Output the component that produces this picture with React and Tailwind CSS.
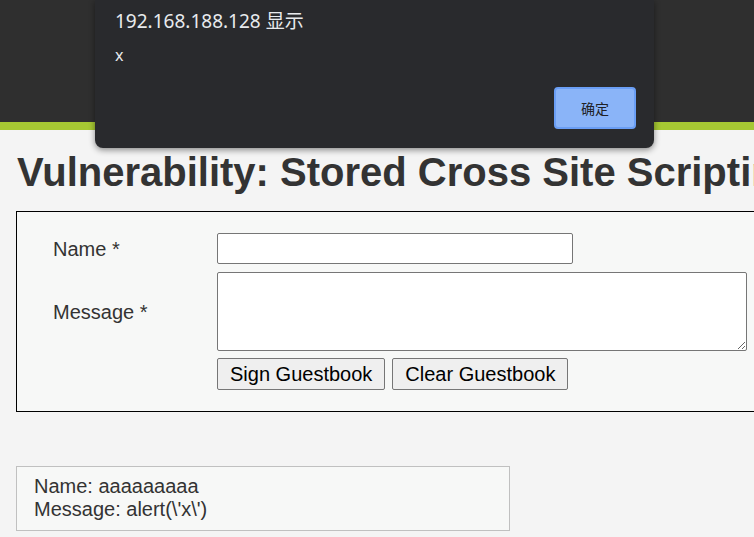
import React from 'react'

function AlertDialog()
{
    return(
        <div className="absolute left-[95px] top-0 w-[559px] h-[148px] bg-[#292a2d] rounded-b-[8px] shadow-[0_2px_6px_rgba(0,0,0,0.45)] font-['Noto_Sans','Noto_Sans_CJK_SC',sans-serif]">
            <div className="pl-[20px] pt-[7px] text-[19px] leading-[28px] text-[#e8eaed]">192.168.188.128 显示</div>
            <div className="pl-[20px] pt-[10px] text-[16px] leading-[20px] text-[#e8eaed]">x</div>
            <div className="flex justify-end pr-[18px] pt-[22px]">
                <button className="w-[82px] h-[42px] rounded-[4px] bg-[#8ab4f8] border-2 border-[#6a9ef5] text-[14px] text-[#202124] font-['Noto_Sans_CJK_SC',sans-serif]">确定</button>
            </div>
        </div>
    )
}

function App()
{
    return(
        <div className="relative w-[754px] h-[537px] overflow-hidden bg-[#f4f4f4] font-['Liberation_Sans',Arial,sans-serif] text-[#333]">
            <div className="h-[130px] bg-[#2f2f2f] border-b-[8px] border-[#a6c833]"></div>

            <div className="pl-[17px] w-[1200px]">
                <h1 className="mt-[19px] text-[40px] leading-[46px] font-bold text-[#333] whitespace-nowrap">Vulnerability: Stored Cross Site Scripting (XSS)</h1>

                <div className="mt-[16px] w-[900px] h-[201px] border border-black bg-[#f7f8f7] -ml-[1px]">
                    <form className="pt-[21px] pl-[36px]" onSubmit={(e)=>e.preventDefault()}>
                        <div className="flex items-center h-[31px]">
                            <label className="w-[164px] text-[20px] text-[#333]">Name *</label>
                            <input type="text" className="w-[356px] h-[31px] bg-white border border-[#767676] rounded-[2px] outline-none" />
                        </div>
                        <div className="flex mt-[8px]">
                            <label className="w-[164px] pt-[25px] text-[20px] text-[#333]">Message *</label>
                            <textarea className="w-[530px] h-[79px] bg-white border border-[#767676] rounded-[2px] outline-none"></textarea>
                        </div>
                        <div className="flex gap-[7px] mt-[7px] ml-[164px]">
                            <button className="h-[32px] px-[12px] bg-[#efefef] border border-[#767676] rounded-[2px] text-[20px] text-black">Sign Guestbook</button>
                            <button className="h-[32px] px-[12px] bg-[#efefef] border border-[#767676] rounded-[2px] text-[20px] text-black">Clear Guestbook</button>
                        </div>
                    </form>
                </div>

                <div className="mt-[54px] -ml-[1px] w-[494px] h-[65px] border border-[#c0c0c0] bg-[#f7f8f7] pl-[17px] pt-[8px] text-[20px] leading-[23px] text-[#333]">
                    Name: aaaaaaaaa<br />
                    Message: alert(\'x\')
                </div>
            </div>

            <AlertDialog />
        </div>
    )
}

export default App
